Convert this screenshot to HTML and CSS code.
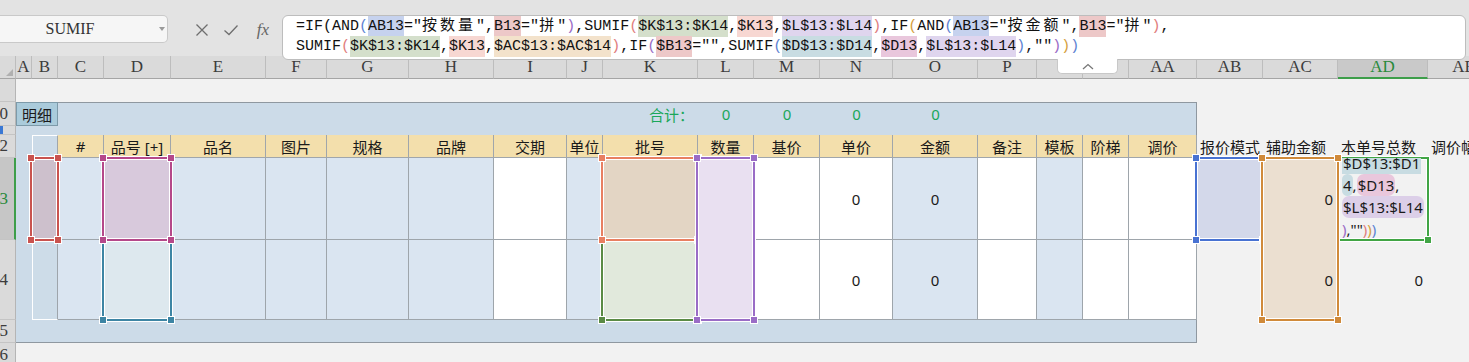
FILE: index.html
```html
<!DOCTYPE html>
<html lang="zh-CN">
<head>
    <meta charset="UTF-8">
    <title>SUMIF</title>
    <link rel="stylesheet" href="styles.css">
</head>
<body>

    <!-- Barra della formula -->
    <div class="topbar">
        <div class="namebox">
            <span class="name">SUMIF</span>
            <span class="caret"></span>
        </div>
        <div class="fx-icons">
            <svg class="ico" width="14" height="14" viewBox="0 0 14 14"><path d="M1.5 1.5L12.5 12.5M12.5 1.5L1.5 12.5" stroke="#6e6e6e" stroke-width="1.3" fill="none"/></svg>
            <svg class="ico ok" width="16" height="14" viewBox="0 0 16 14"><path d="M1.5 7.5L6 11.5L14.5 2.5" stroke="#6e6e6e" stroke-width="1.3" fill="none"/></svg>
            <span class="fx">fx</span>
        </div>
        <div class="formula">
            <div class="fl">=IF(AND<span class="pb">(</span><span class="h hb">AB13</span>="<span class="cj">按数量</span>",<span class="h hp">B13</span>="<span class="cj">拼</span>"<span class="pv">)</span>,SUMIF<span class="pr">(</span><span class="h hg">$K$13:$K14</span>,<span class="h hs">$K13</span>,<span class="h hl">$L$13:$L14</span><span class="pr">)</span>,IF<span class="po">(</span>AND<span class="pb">(</span><span class="h hb">AB13</span>="<span class="cj">按金额</span>",<span class="h hp">B13</span>="<span class="cj">拼</span>"<span class="pr">)</span>,</div>
            <div class="fl">SUMIF<span class="pr">(</span><span class="h hg">$K$13:$K14</span>,<span class="h hs">$K13</span>,<span class="h ht">$AC$13:$AC$14</span><span class="pr">)</span>,IF<span class="pv">(</span><span class="h hp">$B13</span>="",SUMIF<span class="pb">(</span><span class="h hc">$D$13:$D14</span>,<span class="h hm">$D13</span>,<span class="h hl">$L$13:$L14</span><span class="pb">)</span>,""<span class="pv">)</span><span class="po">)</span><span class="pb">)</span></div>
            <div class="tab">
                <svg width="12" height="7" viewBox="0 0 12 7"><path d="M1 6L6 1.5L11 6" stroke="#777" stroke-width="1.3" fill="none"/></svg>
            </div>
        </div>
    </div>

    <!-- Foglio -->
    <div class="sheet">
        <!-- intestazioni colonne -->
        <div class="ch corner"></div>
        <div class="ch">A</div>
        <div class="ch">B</div>
        <div class="ch">C</div>
        <div class="ch">D</div>
        <div class="ch">E</div>
        <div class="ch">F</div>
        <div class="ch">G</div>
        <div class="ch">H</div>
        <div class="ch">I</div>
        <div class="ch">J</div>
        <div class="ch">K</div>
        <div class="ch">L</div>
        <div class="ch">M</div>
        <div class="ch">N</div>
        <div class="ch">O</div>
        <div class="ch">P</div>
        <div class="ch"></div>
        <div class="ch"></div>
        <div class="ch">AA</div>
        <div class="ch">AB</div>
        <div class="ch">AC</div>
        <div class="ch on">AD</div>
        <div class="ch">AE</div>

        <!-- intestazioni righe -->
        <div class="rh row9"></div>
        <div class="rh row10"><span>10</span></div>
        <div class="rh row11 grp"></div>
        <div class="rh row12"><span>12</span></div>
        <div class="rh row13 on"><span>13</span></div>
        <div class="rh row14"><span>14</span></div>
        <div class="rh row15"><span>15</span></div>
        <div class="rh row16"><span>16</span></div>

        <!-- pannello dettaglio -->
        <div class="panel"></div>
        <div class="tag">明细</div>
        <div class="sum-label">合计：</div>
        <div class="sum col-l">0</div>
        <div class="sum col-m">0</div>
        <div class="sum col-n">0</div>
        <div class="sum col-o">0</div>

        <div class="thead">
            <div class="blank"></div>
            <div>#</div>
            <div>品号 [+]</div>
            <div>品名</div>
            <div>图片</div>
            <div>规格</div>
            <div>品牌</div>
            <div>交期</div>
            <div>单位</div>
            <div>批号</div>
            <div>数量</div>
            <div>基价</div>
            <div>单价</div>
            <div>金额</div>
            <div>备注</div>
            <div>模板</div>
            <div>阶梯</div>
            <div>调价</div>
        </div>

        <div class="tbody">
            <div class="b"></div>
            <div></div>
            <div></div>
            <div></div>
            <div></div>
            <div></div>
            <div></div>
            <div class="w"></div>
            <div></div>
            <div></div>
            <div></div>
            <div class="w"></div>
            <div class="w">0</div>
            <div>0</div>
            <div class="w"></div>
            <div></div>
            <div class="w"></div>
            <div class="w"></div>

            <div class="b last"></div>
            <div></div>
            <div></div>
            <div></div>
            <div></div>
            <div></div>
            <div></div>
            <div class="w"></div>
            <div></div>
            <div></div>
            <div></div>
            <div class="w"></div>
            <div class="w">0</div>
            <div>0</div>
            <div class="w"></div>
            <div></div>
            <div class="w"></div>
            <div class="w"></div>
        </div>

        <!-- colonne di appoggio -->
        <div class="side-h col-ab row12">报价模式</div>
        <div class="side-h col-ac row12">辅助金额</div>
        <div class="side-h col-ad row12">本单号总数</div>
        <div class="side-h col-ae row12">调价幅度</div>

        <!-- selezioni dei riferimenti -->
        <div class="sel s-red col-b row13"><i class="hd tl"></i><i class="hd tr"></i><i class="hd bl"></i><i class="hd br"></i></div>
        <div class="sel s-teal col-d row14"><i class="hd bl"></i><i class="hd br"></i></div>
        <div class="sel s-mag col-d row13"><i class="hd tl"></i><i class="hd tr"></i><i class="hd bl"></i><i class="hd br"></i></div>
        <div class="sel s-green col-k row14"><i class="hd bl"></i><i class="hd br"></i></div>
        <div class="sel s-salmon col-k row13"><i class="hd tl"></i><i class="hd tr"></i><i class="hd bl"></i><i class="hd br"></i></div>
        <div class="sel s-purple col-l rows-13-14"><i class="hd tl"></i><i class="hd tr"></i><i class="hd bl"></i><i class="hd br"></i></div>
        <div class="sel s-lime col-ad row13"><i class="hd br"></i></div>
        <div class="sel s-blue col-ab row13"><i class="hd tl"></i><i class="hd tr"></i><i class="hd bl"></i><i class="hd br"></i></div>
        <div class="sel s-orange col-ac rows-13-14"><i class="hd tl"></i><i class="hd tr"></i><i class="hd bl"></i><i class="hd br"></i></div>

        <div class="side-v col-ac row13">0</div>
        <div class="side-v col-ac row14">0</div>
        <div class="side-v col-ad row14">0</div>

        <!-- cella in modifica -->
        <div class="edit col-ad row13">
            <div><span class="hl hc sq">$D$13:$D1</span></div>
            <div><span class="hl hc">4</span>,<span class="hl hm">$D13</span>,</div>
            <div><span class="hl hl2">$L$13:$L14</span></div>
            <div><span class="pv">)</span>,""<span class="pr">)</span><span class="po">)</span><span class="pb">)</span></div>
        </div>
    </div>

</body>
</html>
```

FILE: styles.css
```css
/* Colonne della tabella (B..AA) */
:root {
    --tcols: 26px 46px 67px 95px 61px 82px 85px 73px 36px 95px 56px 66px 73px 85px 59px 46px 46px 68px;
    --grid-line: #9ea5ab;
    --hdr-bg: #dadada;
    --sel-green: #3d9e4a;
}

* {
    box-sizing: border-box;
}

html, body {
    margin: 0;
}

body {
    width: 1469px;
    height: 362px;
    overflow: hidden;
    background: #f2f2f2;
    font-family: "Noto Sans", "Noto Sans CJK SC", sans-serif;
    font-size: 15px;
    color: #1a1a1a;
}

/* Barra della formula */
.topbar {
    position: relative;
    z-index: 5;
    display: flex;
    align-items: flex-start;
    height: 56px;
    background: #e3e3e3;
}

.namebox {
    margin-top: 15px;
    width: 168px;
    height: 28px;
    display: flex;
    align-items: center;
    background: #f6f6f6;
    border: 1px solid #c9c9c9;
    border-left: none;
    border-radius: 0 5px 5px 0;
}

.namebox .name {
    width: 140px;
    text-align: center;
    font-family: "Liberation Serif", serif;
    font-size: 16px;
    color: #333;
}

.namebox .caret {
    margin-left: auto;
    margin-right: 2px;
    border-left: 3.5px solid transparent;
    border-right: 3.5px solid transparent;
    border-top: 4px solid #9a9a9a;
}

.fx-icons {
    display: flex;
    align-items: center;
    height: 16px;
    margin: 22px 0 0 27px;
}

.ico.ok {
    margin-left: 14px;
}

.fx {
    width: 16px;
    margin-left: 16px;
    text-align: center;
    font-family: "Liberation Serif", serif;
    font-style: italic;
    font-size: 17px;
    color: #666;
}

.formula {
    position: relative;
    margin: 15px 0 0 11px;
    width: 1184px;
    height: 45px;
    padding: 1px 0 0 13px;
    background: #fff;
    border: 1px solid #bdbdbd;
    border-radius: 6px;
    font-family: "Liberation Mono", "Noto Sans CJK SC", monospace;
    font-size: 15px;
    line-height: 20px;
    color: #111;
}

.formula .fl {
    white-space: pre;
}

.formula .cj {
    letter-spacing: 3px;
}

.formula .h {
    padding: 2px 0;
}

.formula .tab {
    position: absolute;
    left: 774px;
    top: 100%;
    width: 61px;
    height: 15px;
    display: flex;
    align-items: center;
    justify-content: center;
    background: #fff;
    border: 1px solid #c8c8c8;
    border-top: none;
    border-radius: 0 0 5px 5px;
}

/* evidenziazioni dei riferimenti */
.hb { background: #c6d2ee; }
.hp { background: #edc8c8; }
.hg { background: #d4dfcb; }
.hs { background: #f7d7d2; }
.hl { background: #dfd5ee; }
.ht { background: #f3e2cb; }
.hc { background: #c8dce2; }
.hm { background: #e9c7dc; }

.pb { color: #5d82d2; }
.pr { color: #df7d7d; }
.pv { color: #9a6cc6; }
.po { color: #d5a040; }

/* Foglio */
.sheet {
    display: grid;
    grid-template-columns: 16px 16px var(--tcols) 66px 75px 90px 72px;
    grid-template-rows: 23px 23px 24px 9px 23px 82px 80px 23px 24px;
    width: 1500px;
}

.ch {
    display: flex;
    align-items: center;
    justify-content: center;
    overflow: hidden;
    white-space: nowrap;
    background: var(--hdr-bg);
    border-right: 1px solid #bdbdbd;
    border-bottom: 1px solid #a5a5a5;
    font-family: "Liberation Serif", serif;
    font-size: 17px;
    color: #3c3c3c;
}

.ch.on {
    background: #c9c9c9;
    color: #2a8a3c;
    border-bottom: 2px solid var(--sel-green);
}

.ch.corner {
    position: relative;
}

.ch.corner::after {
    content: "";
    position: absolute;
    right: 2px;
    bottom: 2px;
    border-left: 7px solid transparent;
    border-bottom: 7px solid #b0b0b0;
}

.rh {
    grid-column: 1;
    display: flex;
    align-items: center;
    justify-content: flex-end;
    padding-right: 7px;
    overflow: hidden;
    background: var(--hdr-bg);
    border-right: 1px solid #b5b5b5;
    border-bottom: 1px solid #c4c4c4;
    font-family: "Liberation Serif", serif;
    font-size: 17px;
    color: #3c3c3c;
}

.rh.on {
    background: #c6c6c6;
    color: #2a8a3c;
    border-right: 2px solid var(--sel-green);
    padding-right: 6px;
}

.rh.grp {
    box-shadow: inset 3px 0 0 #3a78d4;
}

.row9 { grid-row: 2; }
.row10 { grid-row: 3; }
.row11 { grid-row: 4; }
.row12 { grid-row: 5; }
.row13 { grid-row: 6; }
.row14 { grid-row: 7; }
.row15 { grid-row: 8; }
.row16 { grid-row: 9; }
.rows-13-14 { grid-row: 6 / 8; }

.col-b { grid-column: 3; }
.col-d { grid-column: 5; }
.col-k { grid-column: 12; }
.col-l { grid-column: 13; }
.col-m { grid-column: 14; }
.col-n { grid-column: 15; }
.col-o { grid-column: 16; }
.col-ab { grid-column: 21; }
.col-ac { grid-column: 22; }
.col-ad { grid-column: 23; }
.col-ae { grid-column: 24; }

/* Pannello "明细" */
.panel {
    grid-column: 2 / 21;
    grid-row: 3 / 9;
    background: #ccdbe8;
    border-top: 1px solid #8f98a0;
    border-right: 1px solid #8f98a0;
    border-bottom: 1px solid #8f98a0;
}

.tag {
    grid-column: 2 / 4;
    grid-row: 3;
    display: flex;
    align-items: center;
    justify-content: center;
    background: #aacbdb;
    border: 1px solid #7d9aa9;
}

.sum-label {
    grid-column: 12;
    grid-row: 3;
    display: flex;
    align-items: center;
    justify-content: flex-end;
    padding-right: 4px;
    color: #1aa75a;
}

.sum {
    grid-row: 3;
    display: flex;
    align-items: center;
    justify-content: center;
    color: #1aa75a;
}

.thead {
    grid-column: 3 / 21;
    grid-row: 5;
    display: grid;
    grid-template-columns: var(--tcols);
}

.thead div {
    display: flex;
    align-items: center;
    justify-content: center;
    white-space: nowrap;
    background: #f3dfac;
    border-right: 1px solid #a0a6ab;
    border-bottom: 1px solid #a0a6ab;
}

.thead .blank {
    background: transparent;
    border-left: 1px solid #fff;
    border-top: 1px solid #fff;
}

.tbody {
    grid-column: 3 / 21;
    grid-row: 6 / 8;
    display: grid;
    grid-template-columns: var(--tcols);
    grid-template-rows: 82px 80px;
}

.tbody div {
    display: flex;
    align-items: center;
    justify-content: center;
    background: #dae5f1;
    border-right: 1px solid var(--grid-line);
    border-bottom: 1px solid var(--grid-line);
}

.tbody .w {
    background: #fff;
}

.tbody .b {
    background: #cddce8;
    border-left: 1px solid #fff;
}

.tbody .b.last {
    border-bottom-color: #fff;
}

/* Colonne a destra */
.side-h {
    display: flex;
    align-items: center;
    padding-left: 3px;
    white-space: nowrap;
}

.side-v {
    z-index: 3;
    display: flex;
    align-items: center;
    justify-content: flex-end;
    padding-right: 5px;
}

/* Selezioni */
.sel {
    position: relative;
    z-index: 2;
    margin: -1px -1px -1px -2px;
    border: 2px solid currentColor;
    box-shadow: 0 0 0 1px #fff, inset 0 0 0 1px #fff;
}

.hd {
    position: absolute;
    width: 8px;
    height: 8px;
    background: currentColor;
    border: 1px solid #fff;
}

.hd.tl { left: -5px; top: -5px; }
.hd.tr { right: -5px; top: -5px; }
.hd.bl { left: -5px; bottom: -5px; }
.hd.br { right: -5px; bottom: -5px; }

.s-red { color: #c9534f; background: #cdc0cc; }
.s-mag { color: #b5488a; background: #d8c9dc; }
.s-teal { color: #3d85a4; background: #dde8ee; }
.s-salmon { color: #e87f61; background: #e3d5c4; }
.s-green { color: #5a8b45; background: #e1e9dc; }
.s-purple { color: #9a6cc6; background: #e9e0f1; }
.s-blue { color: #4872d2; background: #d3d8ea; }
.s-orange { color: #d08a3a; background: #ebdfd0; }
.s-lime { color: #41a545; background: transparent; }

/* Cella in modifica */
.edit {
    z-index: 3;
    display: flex;
    flex-direction: column;
    justify-content: flex-end;
    overflow: hidden;
    padding-left: 4px;
    line-height: 22px;
    white-space: nowrap;
}

.edit .hl {
    padding: 1px 1px;
    border-radius: 7px;
}

.edit .hl.sq {
    border-radius: 0;
}

.edit .hl2 {
    background: #dccfe8;
}
```
